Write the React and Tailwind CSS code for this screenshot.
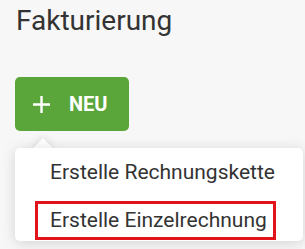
export default function App() {
  return (
    <div
      className="w-[305px] h-[249px] overflow-hidden bg-[#f7f7f7] relative"
      style={{ fontFamily: 'Roboto, "Liberation Sans", sans-serif' }}
    >
      <div className="pl-[16px] pt-[5px]">
        <h1 className="text-[28px] leading-[32px] font-normal text-[#333333]">Fakturierung</h1>
      </div>
      <div className="pl-[15px] mt-[40px]">
        <button className="h-[54px] w-[114px] rounded-[5px] bg-[#5aa63a] flex items-center pl-[17px] gap-[18px] text-white">
          <svg width="19" height="19" viewBox="0 0 19 19" fill="none">
            <path d="M9.5 1v17M1 9.5h17" stroke="white" strokeWidth="2.4" />
          </svg>
          <span className="text-[20px] leading-[24px] font-bold">NEU</span>
        </button>
      </div>
      <div className="pl-[15px] mt-[17px]">
        <div className="relative w-[288px]">
          <div className="absolute left-[21px] top-[-7px] w-[14px] h-[14px] rotate-45 bg-white shadow-[0_0_8px_rgba(0,0,0,0.15)]" />
          <div className="relative bg-white rounded-[5px] shadow-[0_2px_14px_rgba(0,0,0,0.15)] pt-[12px] pb-[1px] text-[21px] leading-[24px] text-[#333333]">
            <div className="pl-[35px]">Erstelle Rechnungskette</div>
            <div className="ml-[20px] mt-[17px] w-[241px] border-[3px] border-[#e3131b] pl-[12px] pt-[4px] pb-[5px]">
              Erstelle Einzelrechnung
            </div>
          </div>
        </div>
      </div>
    </div>
  );
}
